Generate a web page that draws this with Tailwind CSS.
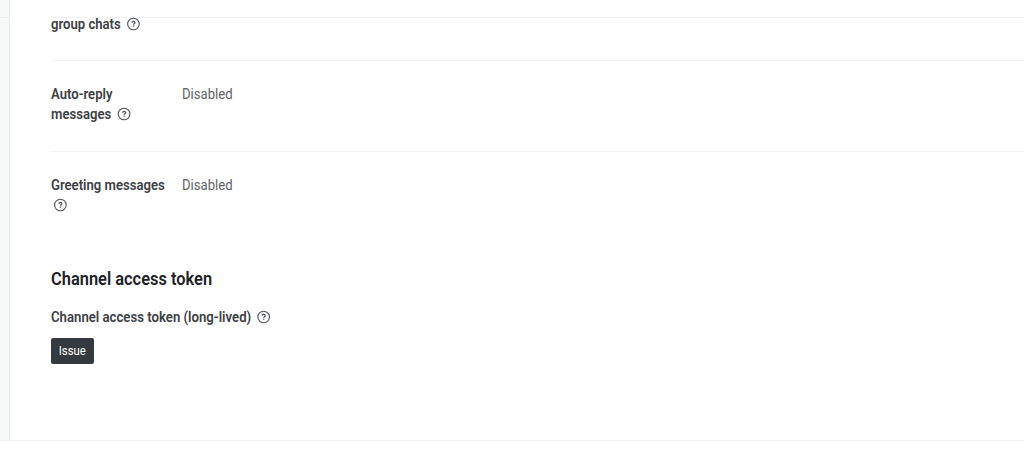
<!DOCTYPE html>
<html lang="en">
<head>
  <meta charset="UTF-8">
  <meta name="viewport" content="width=device-width, initial-scale=1.0">
  <title>Messaging API</title>
  <script src="https://cdn.jsdelivr.net/npm/@tailwindcss/browser@4"></script>
</head>
<body class="bg-white font-['Roboto',sans-serif] text-sm leading-[19.5px] text-[#3c4043] overflow-hidden">
  <svg class="hidden">
    <symbol id="help" viewBox="0 0 14 14">
      <circle cx="7" cy="7" r="5.8" fill="none" stroke="currentColor" stroke-width="1.1" />
      <path d="M5.5 5.8c0-.9.6-1.4 1.5-1.4s1.5.5 1.5 1.3c0 1-1.4 1.1-1.4 2.1" fill="none" stroke="currentColor" stroke-width="1.3" />
      <path d="M6.4 8.6h1.3v1.2H6.4z" fill="currentColor" />
    </symbol>
  </svg>

  <div class="flex h-[441px] border-b border-[#f1f1f2]">
    <!-- Sidebar -->
    <aside class="w-[10px] shrink-0 bg-[#f7f8fa] border-r border-[#e9eaed]">
      <div class="h-[18px] border-b border-[#eeeff1]"></div>
    </aside>

    <!-- Main Content -->
    <main class="flex-1 pl-[41px]">
      <div class="h-[17px]"></div>
      <section class="border-t border-[#f3f3f4]">
        <div class="flex h-[43px] border-b border-[#f3f3f4]">
          <h3 class="w-[124px] -mt-[3.5px] font-semibold origin-left scale-x-[0.937]">group chats <svg class="inline-block w-[14px] h-[14px] ml-[3px] -mt-[2px] scale-x-[1.067] text-[#505458]"><use href="#help" /></svg></h3>
        </div>
        <div class="flex h-[91px] pt-6 border-b border-[#f3f3f4]">
          <h3 class="w-[124px] mr-[7px] font-semibold origin-left scale-x-[0.937]">Auto-reply messages <svg class="inline-block w-[14px] h-[14px] ml-[3px] -mt-[2px] scale-x-[1.067] text-[#505458]"><use href="#help" /></svg></h3>
          <p class="text-[#5f6368] origin-left scale-x-[0.937]">Disabled</p>
        </div>
        <div class="flex h-[91px] pt-6">
          <h3 class="w-[124px] mr-[7px] font-semibold origin-left scale-x-[0.937]">Greeting messages <svg class="inline-block w-[14px] h-[14px] ml-[3px] -mt-[2px] scale-x-[1.067] text-[#505458]"><use href="#help" /></svg></h3>
          <p class="text-[#5f6368] origin-left scale-x-[0.937]">Disabled</p>
        </div>
      </section>

      <section class="pt-6">
        <h2 class="text-lg leading-6 font-semibold text-[#202124] origin-left scale-x-[0.912]">Channel access token</h2>
        <h3 class="mt-[17px] font-semibold origin-left scale-x-[0.941]">Channel access token (long-lived) <svg class="inline-block w-[14px] h-[14px] ml-[3px] -mt-[3px] scale-x-[1.063] text-[#505458]"><use href="#help" /></svg></h3>
        <button class="block mt-[10px] w-[43px] h-[26px] rounded-[2px] bg-[#353a40] text-white text-xs"><span class="inline-block scale-x-[0.95]">Issue</span></button>
      </section>
    </main>
  </div>
</body>
</html>
